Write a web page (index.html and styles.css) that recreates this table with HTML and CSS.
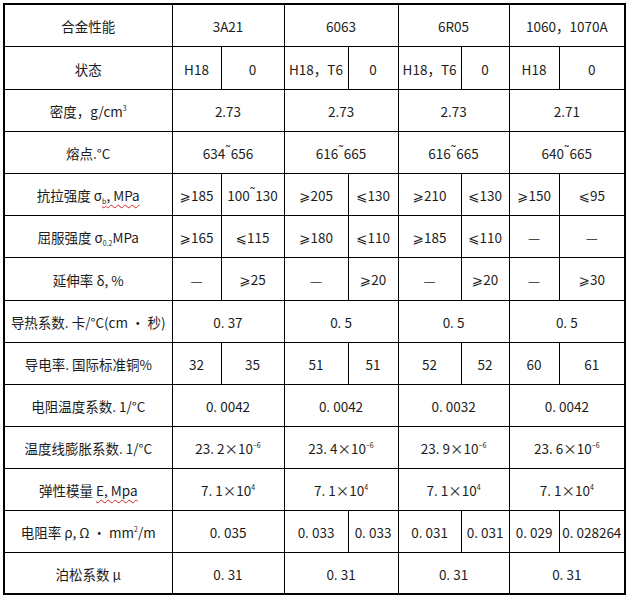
FILE: index.html
```html
<!DOCTYPE html>
<html lang="zh">
<head>
<meta charset="utf-8">
<link rel="stylesheet" href="styles.css">
</head>
<body>
<table class="spec">
  <colgroup>
    <col class="c-label">
    <col class="c-a1"><col class="c-a2">
    <col class="c-b1"><col class="c-b2">
    <col class="c-c1"><col class="c-c2">
    <col class="c-d1"><col class="c-d2">
  </colgroup>
  <tr>
    <td>合金性能</td>
    <td colspan="2">3A21</td>
    <td colspan="2">6063</td>
    <td colspan="2">6R05</td>
    <td colspan="2">1060，1070A</td>
  </tr>
  <tr class="tall">
    <td>状态</td>
    <td>H18</td><td>0</td>
    <td>H18，T6</td><td>0</td>
    <td>H18，T6</td><td>0</td>
    <td>H18</td><td>0</td>
  </tr>
  <tr>
    <td>密度，g/cm<sup class="sup">3</sup></td>
    <td colspan="2">2.73</td>
    <td colspan="2">2.73</td>
    <td colspan="2">2.73</td>
    <td colspan="2">2.71</td>
  </tr>
  <tr>
    <td>熔点.°C</td>
    <td colspan="2">634<span class="tl">˜</span>656</td>
    <td colspan="2">616<span class="tl">˜</span>665</td>
    <td colspan="2">616<span class="tl">˜</span>665</td>
    <td colspan="2">640<span class="tl">˜</span>665</td>
  </tr>
  <tr>
    <td>抗拉强度 σ<span class="wavy"><sub class="sub">b</sub>, MPa</span></td>
    <td><span class="m">⩾</span>185</td><td>100<span class="tl">˜</span>130</td>
    <td><span class="m">⩾</span>205</td><td><span class="m">⩽</span>130</td>
    <td><span class="m">⩾</span>210</td><td><span class="m">⩽</span>130</td>
    <td><span class="m">⩾</span>150</td><td><span class="m">⩽</span>95</td>
  </tr>
  <tr>
    <td>屈服强度 σ<sub class="sub">0.2</sub>MPa</td>
    <td><span class="m">⩾</span>165</td><td><span class="m">⩽</span>115</td>
    <td><span class="m">⩾</span>180</td><td><span class="m">⩽</span>110</td>
    <td><span class="m">⩾</span>185</td><td><span class="m">⩽</span>110</td>
    <td>—</td><td>—</td>
  </tr>
  <tr class="tall">
    <td>延伸率 δ, %</td>
    <td>—</td><td><span class="m">⩾</span>25</td>
    <td>—</td><td><span class="m">⩾</span>20</td>
    <td>—</td><td><span class="m">⩾</span>20</td>
    <td>—</td><td><span class="m">⩾</span>30</td>
  </tr>
  <tr>
    <td>导热系数. 卡/°C(cm · 秒)</td>
    <td colspan="2">0. 37</td>
    <td colspan="2">0. 5</td>
    <td colspan="2">0. 5</td>
    <td colspan="2">0. 5</td>
  </tr>
  <tr>
    <td>导电率. 国际标准铜%</td>
    <td>32</td><td>35</td>
    <td>51</td><td>51</td>
    <td>52</td><td>52</td>
    <td>60</td><td>61</td>
  </tr>
  <tr>
    <td>电阻温度系数. 1/°C</td>
    <td colspan="2">0. 0042</td>
    <td colspan="2">0. 0042</td>
    <td colspan="2">0. 0032</td>
    <td colspan="2">0. 0042</td>
  </tr>
  <tr>
    <td>温度线膨胀系数. 1/°C</td>
    <td colspan="2">23. 2×10<sup class="sup">−6</sup></td>
    <td colspan="2">23. 4×10<sup class="sup">−6</sup></td>
    <td colspan="2">23. 9×10<sup class="sup">−6</sup></td>
    <td colspan="2">23. 6×10<sup class="sup">−6</sup></td>
  </tr>
  <tr>
    <td>弹性模量 <span class="wavy">E, Mpa</span></td>
    <td colspan="2">7. 1×10<sup class="sup">4</sup></td>
    <td colspan="2">7. 1×10<sup class="sup">4</sup></td>
    <td colspan="2">7. 1×10<sup class="sup">4</sup></td>
    <td colspan="2">7. 1×10<sup class="sup">4</sup></td>
  </tr>
  <tr>
    <td>电阻率 ρ, Ω · mm<sup class="sup">2</sup>/m</td>
    <td colspan="2">0. 035</td>
    <td>0. 033</td><td>0. 033</td>
    <td>0. 031</td><td>0. 031</td>
    <td>0. 029</td><td>0. 028264</td>
  </tr>
  <tr>
    <td>泊松系数 μ</td>
    <td colspan="2">0. 31</td>
    <td colspan="2">0. 31</td>
    <td colspan="2">0. 31</td>
    <td colspan="2">0. 31</td>
  </tr>
</table>
</body>
</html>
```

FILE: styles.css
```css
html, body {
  margin: 0;
  padding: 0;
  background: #ffffff;
}

body {
  padding: 3px 0 0 3px;
}

.spec {
  border-collapse: collapse;
  table-layout: fixed;
  width: 622px;
  border: 2px solid #000;
  font-family: "Noto Sans CJK SC", "Noto Sans", "DejaVu Sans", sans-serif;
  font-size: 13.5px;
  color: #1c1c1c;
}

.spec td {
  border: 1px solid #000;
  height: 42px;
  padding: 2px 0 0 0;
  text-align: center;
  vertical-align: middle;
  white-space: nowrap;
  box-sizing: border-box;
  line-height: 16px;
}

.spec tr.tall td {
  height: 43px;
}

.c-label { width: 168px; }
.c-a1 { width: 49px; }
.c-a2 { width: 63px; }
.c-b1 { width: 64px; }
.c-b2 { width: 50px; }
.c-c1 { width: 63px; }
.c-c2 { width: 48px; }
.c-d1 { width: 50px; }
.c-d2 { width: 66px; }

.sup {
  font-size: 7px;
  vertical-align: 6px;
  line-height: 0;
}

.sub {
  font-size: 7px;
  vertical-align: -3px;
  line-height: 0;
}

.tl {
  display: inline-block;
  font-size: 12px;
  transform: translateY(-4px);
}

.m {
  font-family: "DejaVu Sans", "Noto Sans CJK SC", sans-serif;
}

.wavy {
  text-decoration: underline wavy #d02020;
  text-decoration-thickness: 1px;
  text-underline-offset: 3px;
}
```
